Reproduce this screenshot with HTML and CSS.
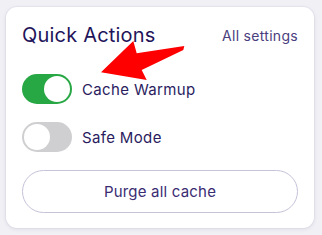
FILE: index.html
```html
<!DOCTYPE html>
<html>
<head>
<meta charset="utf-8">
<link rel="stylesheet" href="styles.css">
</head>
<body>
<div class="card">
  <div class="header">
    <h2 class="title">Quick Actions</h2>
    <a class="link">All settings</a>
  </div>
  <div class="toggles">
    <div class="row">
      <span class="switch on"><span class="knob"></span></span>
      <span class="label">Cache Warmup</span>
    </div>
    <div class="row">
      <span class="switch off"><span class="knob"></span></span>
      <span class="label">Safe Mode</span>
    </div>
  </div>
  <button class="btn">Purge all cache</button>
</div>
<svg class="arrow" width="322" height="235" viewBox="0 0 322 235">
  <polygon points="101,72.3 133.3,41 136.7,53.3 184.3,46 183.3,50 141.7,70 146.7,80" fill="#ff0000"/>
</svg>
</body>
</html>
```

FILE: styles.css
```css
html, body {
  margin: 0;
  padding: 0;
}
body {
  position: relative;
  width: 322px;
  height: 235px;
  background: #f1f0f5;
  font-family: Inter, "Liberation Sans", sans-serif;
  padding: 7px 8px 7px 6px;
  box-sizing: border-box;
  overflow: hidden;
}
.card {
  width: 308px;
  height: 221px;
  box-sizing: border-box;
  background: #ffffff;
  border-radius: 11px;
  box-shadow: 0 1px 4px rgba(40, 30, 90, 0.10), 0 0 0 1px rgba(40, 30, 90, 0.03);
  padding: 16px 16px 15px 16px;
  display: flex;
  flex-direction: column;
}
.header {
  display: flex;
  justify-content: space-between;
  align-items: center;
  height: 24px;
}
.title {
  margin: 0;
  font-size: 20px;
  font-weight: 400;
  line-height: 24px;
  color: #23145a;
  letter-spacing: 0.2px;
}
.link {
  font-size: 14px;
  line-height: 17px;
  color: #4a3e7e;
  letter-spacing: 0.3px;
}
.toggles {
  margin-top: 27px;
  display: flex;
  flex-direction: column;
  gap: 18px;
}
.row {
  display: flex;
  align-items: center;
  gap: 10px;
  height: 30px;
}
.switch {
  width: 50px;
  height: 30px;
  border-radius: 15px;
  box-sizing: border-box;
  padding: 2px;
  display: flex;
}
.switch.on {
  background: #28a745;
  justify-content: flex-end;
}
.switch.off {
  background: #cfcfd1;
  justify-content: flex-start;
}
.knob {
  width: 26px;
  height: 26px;
  border-radius: 50%;
  background: #ffffff;
}
.label {
  font-size: 15px;
  color: #2a1c5e;
  letter-spacing: 0.35px;
}
.btn {
  margin-top: 18px;
  width: 276px;
  height: 43px;
  border: 1px solid #c6c2d8;
  border-radius: 22px;
  background: #ffffff;
  font-family: Inter, "Liberation Sans", sans-serif;
  font-size: 15px;
  color: #3a2c72;
  letter-spacing: 0.2px;
  padding: 0;
}
.arrow {
  position: absolute;
  left: 0;
  top: 0;
  pointer-events: none;
}
```
